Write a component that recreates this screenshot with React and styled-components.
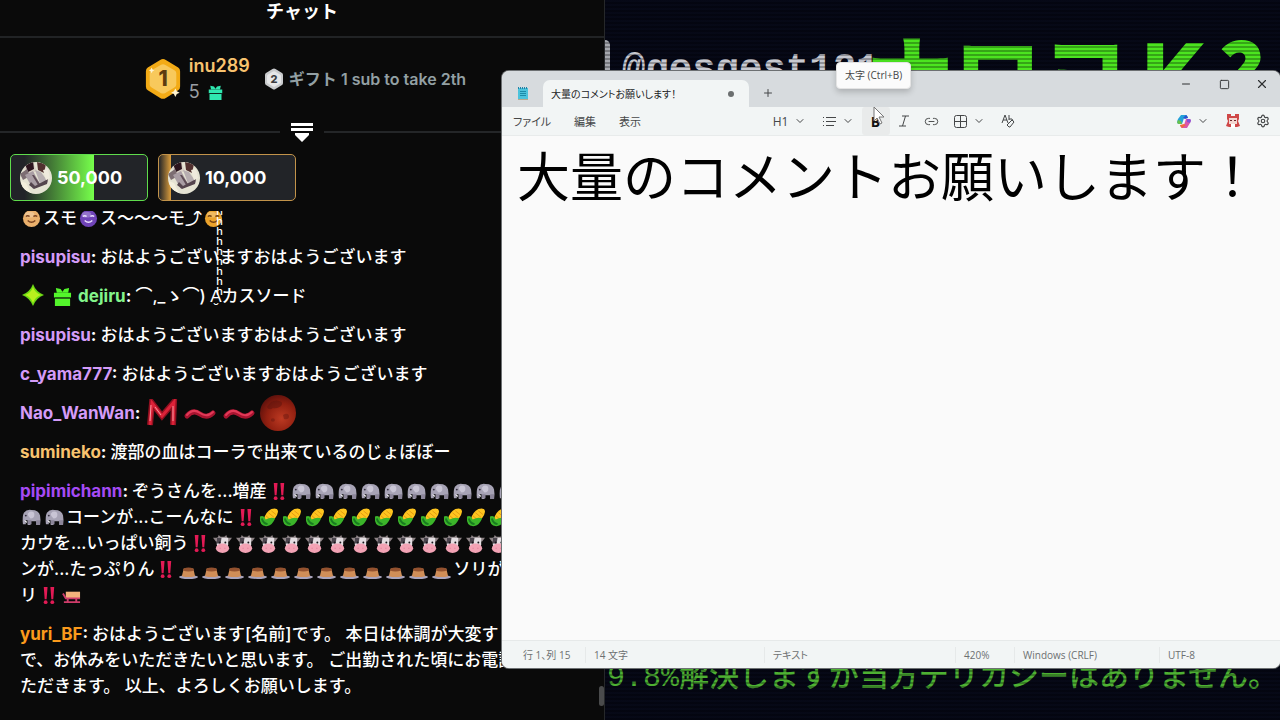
import React from "react";
import styled, { createGlobalStyle } from "styled-components";
import { ChevronDown, Link2, Minus, Plus, Settings, Square, X } from "lucide-react";

const CHAT_FONT = `Inter, "Noto Sans CJK JP", sans-serif`;
const UI_FONT = `"Open Sans", "Noto Sans CJK JP", sans-serif`;

const GlobalStyle = createGlobalStyle`
  *, *::before, *::after { box-sizing: border-box; }
  html, body, #root { height: 100%; }
  body { margin: 0; background: #0a0a0a; }
  button, textarea { font: inherit; color: inherit; border: 0; padding: 0; margin: 0; background: none; }
  h1, p { margin: 0; }
`;

const Desktop = styled.div`
  position: relative;
  display: grid;
  grid-template-columns: 605fr 675fr;
  height: 100%;
  min-height: 720px;
  overflow: hidden;
`;

/* ---------- chat ---------- */

const Chat = styled.section`
  display: flex;
  flex-direction: column;
  min-width: 0;
  min-height: 0;
  overflow: hidden;
  background: #0a0a0a;
  border-right: 1px solid #26282a;
  color: #fff;
  font-family: ${CHAT_FONT};
  font-size: 17px;
  line-height: 26px;
`;

const ChatHeader = styled.header`
  display: flex;
  justify-content: center;
  height: 38px;
  border-bottom: 2px solid #212325;
`;

const ChatTitle = styled.h1`
  font-size: 18px;
  font-weight: 700;
  line-height: 24px;
`;

const Leaderboard = styled.div`
  display: flex;
  align-items: center;
  justify-content: center;
  gap: 14px;
  height: 82px;
  padding-left: 6px;
`;

const Leader = styled.div`
  display: flex;
  align-items: center;
  gap: 7px;
`;

const LeaderName = styled.div`
  color: #f8c36f;
  font-size: 18px;
  font-weight: 600;
  line-height: 26px;
`;

const LeaderCount = styled.div`
  display: flex;
  align-items: center;
  gap: 6px;
  color: #9a9ea3;
  font-size: 18px;
  line-height: 26px;
`;

const RunnerUp = styled.div`
  display: flex;
  align-items: center;
  gap: 5px;
  color: #93a0a4;
  font-size: 16px;
  font-weight: 600;
`;

const Divider = styled.div`
  display: flex;
  align-items: center;
  gap: 10px;
  height: 24px;

  &::before,
  &::after {
    content: "";
    flex: 1;
    height: 2px;
    background: #242628;
  }
`;

const CollapseButton = styled.button`
  display: flex;
  width: 24px;
  justify-content: center;
`;

const Pins = styled.div`
  display: flex;
  gap: 10px;
  padding: 10px 10px 0;
`;

const Pin = styled.button`
  display: flex;
  align-items: center;
  gap: 5px;
  width: 138px;
  height: 47px;
  padding-left: 9px;
  border: 1px solid ${p => p.$edge};
  border-radius: 5px;
  background: linear-gradient(
    90deg,
    #222428 ${p => p.$from}%,
    ${p => p.$color} ${p => p.$fill}%,
    #222428 ${p => p.$fill}%
  );
  color: #fff;
  font-size: 18px;
  font-weight: 700;
`;

const Messages = styled.div`
  display: flex;
  flex: 1;
  flex-direction: column;
  justify-content: flex-end;
  gap: 13px;
  min-height: 0;
  margin-top: 10px;
  padding: 0 20px 21px;
  overflow: hidden;
  white-space: nowrap;
  font-weight: 500;
`;

const Message = styled.p`
  flex: none;

  svg {
    vertical-align: -4px;
  }
`;

const Name = styled.span`
  color: ${p => p.$color};
  font-weight: 700;
`;

const Colon = styled.span`
  font-weight: 700;
`;

const Emote = styled.svg`
  margin: 0 2px;
`;

const Stack = styled.span`
  position: relative;
`;

const StackedMarks = styled.span`
  position: absolute;
  bottom: 10px;
  left: 6px;
  width: 7px;
  font-size: 11px;
  font-weight: 500;
  line-height: 10px;
  white-space: pre-line;
`;

const ScrollThumb = styled.div`
  position: absolute;
  left: calc(47.27% - 6px);
  bottom: 14px;
  width: 5px;
  height: 20px;
  border-radius: 3px;
  background: #4a4b4c;
`;

/* ---------- stream screen behind the editor ---------- */

const Screen = styled.section`
  position: relative;
  display: flex;
  flex-direction: column;
  justify-content: space-between;
  min-width: 0;
  overflow: hidden;
  background: #050714;
  white-space: nowrap;

  &::after {
    content: "";
    position: absolute;
    inset: 0;
    background: repeating-linear-gradient(
      180deg,
      rgba(18, 24, 44, 0.1) 0 2px,
      rgba(2, 3, 10, 0.35) 2px 4px
    );
  }
`;

const ScreenTop = styled.div`
  display: flex;
  align-items: flex-start;
  padding-top: 34px;
`;

const BubbleEdge = styled.div`
  flex: none;
  width: 5px;
  height: 50px;
  margin-top: 6px;
  border-radius: 0 5px 0 0;
  background: #b6b8bc;
`;

const Handle = styled.span`
  padding: 13px 0 0 12px;
  color: #dcdde3;
  font: 700 39px/46px "Liberation Mono", monospace;
`;

const Logo = styled.span`
  margin-left: -14px;
  color: #52fb1e;
  font: 900 88px/74px "Noto Sans CJK JP", sans-serif;
`;

const Caption = styled.p`
  padding: 0 0 22px 2px;
  color: #55c234;
  font: 700 30px/40px "Liberation Mono", "Noto Sans CJK JP", monospace;
  font-weight: 500;
`;

/* ---------- editor window ---------- */

const Window = styled.main`
  position: absolute;
  top: 71px;
  right: 0;
  bottom: 52px;
  left: 502px;
  display: flex;
  flex-direction: column;
  overflow: hidden;
  border-radius: 7px;
  background: #fafafa;
  color: #454748;
  font-family: ${UI_FONT};
  font-size: 11px;
  box-shadow: 0 0 0 1px #6d7072;
`;

const TitleBar = styled.header`
  display: flex;
  align-items: flex-start;
  height: 36px;
  background: #d7dbde;
`;

const AppIcon = styled.div`
  display: flex;
  align-items: flex-end;
  justify-content: center;
  width: 41px;
  height: 30px;
`;

const Tab = styled.div`
  display: flex;
  align-items: center;
  justify-content: space-between;
  width: 206px;
  height: 27px;
  margin-top: 9px;
  padding: 0 15px 0 8px;
  border-radius: 7px 7px 0 0;
  background: #f2f5f5;
  color: #232425;
  font-size: 10px;
  font-feature-settings: "palt";
`;

const Dirty = styled.span`
  width: 6px;
  height: 6px;
  border-radius: 50%;
  background: #6c6f70;
`;

const NewTab = styled.button`
  display: flex;
  align-items: center;
  justify-content: center;
  width: 38px;
  height: 44px;
`;

const WindowControls = styled.div`
  display: flex;
  margin-left: auto;
`;

const WindowButton = styled.button`
  display: flex;
  align-items: center;
  justify-content: center;
  width: 39px;
  height: 26px;
  color: #2d2f30;

  &:last-child {
    width: 36px;
  }
`;

const Toolbar = styled.div`
  display: grid;
  grid-template-columns: 1fr auto 1fr;
  align-items: center;
  height: 29px;
  border-bottom: 1px solid #e8ebeb;
  background: #f2f5f5;
`;

const MenuGroup = styled.div`
  display: flex;
`;

const FormatGroup = styled.div`
  display: flex;
  padding-left: 5px;
`;

const AccountGroup = styled.div`
  display: flex;
  justify-content: flex-end;
  gap: 2px;
  padding-right: 3px;
`;

const MenuButton = styled.button`
  height: 28px;
  padding: 0 12px 0 11px;
  font-size: 11px;
  font-feature-settings: "palt";
`;

const Tool = styled.button`
  display: flex;
  align-items: center;
  justify-content: center;
  gap: ${p => (p.$wide ? 6 : 0)}px;
  width: ${p => (p.$wide ? 48 : 28)}px;
  height: 28px;
  border-radius: 3px;
  background: ${p => (p.$hover ? "#e9ebeb" : "transparent")};
  font-size: 12px;
`;

const BoldLetter = styled.b`
  color: #111;
  font-size: 14px;
`;

const Editor = styled.textarea`
  flex: 1;
  min-height: 0;
  padding: 0 0 0 15px;
  overflow: hidden;
  outline: 0;
  resize: none;
  color: #000;
  font: 400 53px/76px "Noto Sans CJK JP", sans-serif;
`;

const StatusBar = styled.footer`
  display: grid;
  grid-template-columns: 83px 1fr 191px 59px 145px 121px;
  align-items: center;
  height: 28px;
  border-top: 1px solid #e6e9e9;
  background: #f2f5f5;
  color: #6d7071;
  font-size: 10px;
  font-feature-settings: "palt";
`;

const StatusItem = styled.span`
  padding-left: ${p => (p.$first ? 20 : 8)}px;
  border-left: 1px solid ${p => (p.$first ? "transparent" : "#e6e9e9")};
  line-height: 16px;
  white-space: nowrap;
`;

const Tooltip = styled.div`
  position: absolute;
  top: 62px;
  left: 836px;
  padding: 0 8px;
  border: 1px solid #e4e4e4;
  border-radius: 4px;
  background: #fbfbfb;
  box-shadow: 0 3px 6px rgba(0, 0, 0, 0.2);
  color: #454748;
  font: 400 10px/25px ${UI_FONT};
  white-space: nowrap;
`;

const Pointer = styled.svg`
  position: absolute;
  top: 106px;
  left: 873px;
`;

/* ---------- drawings ---------- */

const HexBadge = ({ size, rank, rim, face, ink }) => (
  <svg width={size} height={size * 1.1} viewBox="0 0 40 44">
    <path d="M17 2q3-2 6 0l13 8q2 1 2 4v16q0 3-2 4l-13 8q-3 2-6 0L4 34q-2-1-2-4V14q0-3 2-4z" fill={rim} />
    <path d="M18 7q2-1 4 0l10 6q2 1 2 3v12q0 2-2 3l-10 6q-2 1-4 0l-10-6q-2-1-2-3V16q0-2 2-3z" fill={face} />
    <text x="20" y="30" textAnchor="middle" fontSize="22" fontWeight="800" fontFamily="Inter" fill={ink}>
      {rank}
    </text>
    {size > 30 && (
      <g fill="#fff3d0">
        <path d="M33 32l1.500 3 3 1.500-3 1.500-1.500 3-1.500-3-3-1.500 3-1.500z" />
        <path d="M8 10l1 2 2 1-2 1-1 2-1-2-2-1 2-1z" />
      </g>
    )}
  </svg>
);

const Gift = ({ size, color }) => (
  <Emote width={size} height={size} viewBox="0 0 20 20">
    <path d="M1 6h18v5H1z M2 12h16v8H2z" fill={color} />
    <path d="M3 1l5 1 2 3 2-3 5-1-1 5H4z" fill={color} />
    <path d="M2 11h16v1H2z" fill="#0a0a0a" opacity=".5" />
  </Emote>
);

const Sparkle = () => (
  <Emote width="22" height="22" viewBox="0 0 22 22">
    <path d="M11 0q3 8 11 11-8 3-11 11-3-8-11-11 8-3 11-11z" fill="#6bd914" />
    <path d="M11 3q2 6 8 8-6 2-8 8-2-6-8-8 6-2 8-8z" fill="#b8f01e" />
  </Emote>
);

const Collapse = () => (
  <svg width="22" height="20" viewBox="0 0 22 20" fill="#fff">
    <path d="M0 1h22v3H0z M0 6h22v3H0z M4 11h14v2l-7 7-7-7z" />
  </svg>
);

const Avatar = () => (
  <svg width="32" height="32" viewBox="0 0 32 32">
    <clipPath id="round"><circle cx="16" cy="16" r="16" /></clipPath>
    <g clipPath="url(#round)">
      <path d="M0 0h32v32H0z" fill="#e5e3d3" />
      <path d="M3 4l10-4 4 9-9 4z" fill="#d8d0c6" />
      <path d="M5 2l8-3 1 8-6 3z" fill="#2b141d" />
      <path d="M17 0l9 2-2 9-6-3z" fill="#51302f" />
      <path d="M0 12l7-5 3 7-7 4z" fill="#7c6d72" />
      <path d="M5 13l8-4 7 13-7 5z" fill="#a99da4" />
      <path d="M15 8l6 2 7 10-7 4z" fill="#b7aeb1" />
      <path d="M12 13l2 0 6 9-2 1z" fill="#5f4d56" />
      <path d="M11 20l4 4 13-7-1 5-13 5-5-4z" fill="#54444d" />
      <path d="M1 19l5 2 5 10-9-4z" fill="#f3efdd" />
      <path d="M23 8l5-1 2 9-4 2z" fill="#efeadd" />
    </g>
  </svg>
);

const Face = ({ skin, ink }) => (
  <Emote width="19" height="19" viewBox="0 0 20 20">
    <circle cx="10" cy="10" r="9" fill={skin} />
    <ellipse cx="8" cy="6" rx="5" ry="3" fill="#fff" opacity=".25" />
    <path d="M4 8q2-2 4 0M12 8q2-2 4 0M6 12q4 4 8 0" fill="none" stroke={ink} strokeWidth="1.500" />
  </Emote>
);

const Bangs = () => (
  <Emote width="19" height="19" viewBox="0 0 20 20" fill="#e31a55">
    <path d="M5 1h4l-1 13H6zM12 1h4l-1 13h-2z" />
    <circle cx="7" cy="17" r="2" />
    <circle cx="14" cy="17" r="2" />
  </Emote>
);

const Elephant = () => (
  <Emote width="19" height="19" viewBox="0 0 20 20">
    <path d="M1 17q-1-8 1-12 3-4 8-3 8 0 9 6 1 5 0 10h-4v-4H9v4H6V13H4v4z" fill="#a7a3b5" />
    <path d="M8 4q5-1 5 3 0 4-4 4-3-2-3-5z" fill="#c9c5d5" />
    <path d="M6 13h4v4H6zM15 13h4v5h-4z" fill="#8b8599" />
    <path d="M2 13l3 1v2z" fill="#fff" />
    <circle cx="4" cy="8" r="1" fill="#35303f" />
  </Emote>
);

const Corn = () => (
  <Emote width="19" height="19" viewBox="0 0 20 20">
    <path d="M5 12Q7 4 13 1q7-2 7 3-1 7-9 11z" fill="#ffc51f" />
    <path d="M10 5l6 5M13 3l5 4M7 8l6 5" stroke="#e29a12" strokeWidth="1" />
    <path d="M1 9q4-2 6 3 6-3 10-1-3 7-8 8-9 1-8-10z" fill="#3bb52a" />
    <path d="M3 11q1 5 6 6" stroke="#187a20" strokeWidth="2" fill="none" />
  </Emote>
);

const Cow = () => (
  <Emote width="19" height="19" viewBox="0 0 20 20">
    <path d="M0 4h5l1-3 2 2h4l2-2 1 3h5l-3 4H3z" fill="#8d8285" />
    <path d="M4 4h12v7l-1 5H5l-1-5z" fill="#e4dee2" />
    <path d="M4 4h5l-1 6H4z" fill="#4b454d" />
    <ellipse cx="10" cy="15" rx="7" ry="5" fill="#f3a3b5" />
    <circle cx="7" cy="9" r="1" fill="#17131a" />
    <circle cx="13" cy="9" r="1" fill="#17131a" />
    <path d="M7 15h1M12 15h1" stroke="#d9748e" strokeWidth="1" />
  </Emote>
);

const Pudding = () => (
  <Emote width="19" height="19" viewBox="0 0 20 20">
    <ellipse cx="10" cy="18" rx="10" ry="2" fill="#aaa5bd" />
    <path d="M5 9h10l2 8q-7 2-14 0z" fill="#d08e58" />
    <path d="M5 9q5-2 10 0l1 2q-6 2-12 0z" fill="#94522f" />
  </Emote>
);

const Sled = () => (
  <Emote width="19" height="19" viewBox="0 0 20 20">
    <path d="M4 6h15v7H4z" fill="#f5b27c" />
    <path d="M1 8l3 5h15M2 17h17M6 13v4M15 13v4" fill="none" stroke="#cf3c6a" strokeWidth="2" />
  </Emote>
);

const Horn = () => (
  <Emote width="32" height="28" viewBox="0 0 32 28">
    <path d="M4 26L6 4l10 13L28 3l-1 23" fill="none" stroke="#8f1020" strokeWidth="6" />
    <path d="M4 26L6 4l10 13L28 3l-1 23" fill="none" stroke="#dc2238" strokeWidth="3" />
    <path d="M4 22L5 6M9 8l6 8M27 22V7" fill="none" stroke="#f59aa2" />
  </Emote>
);

const Wave = () => (
  <Emote width="35" height="28" viewBox="0 0 35 28" fill="none" strokeLinecap="round">
    <path d="M5 17q6-7 13-2 7 5 13-1" stroke="#a81430" strokeWidth="5" />
    <path d="M5 16q6-7 13-2 7 5 13-1" stroke="#e23a58" strokeWidth="2" />
  </Emote>
);

const BloodMoon = () => (
  <Emote width="36" height="36" viewBox="0 0 36 36">
    <defs>
      <radialGradient id="moon" cx=".6" cy=".65" r=".7">
        <stop offset="0" stopColor="#bd3a22" />
        <stop offset=".6" stopColor="#901f10" />
        <stop offset="1" stopColor="#5a100c" />
      </radialGradient>
    </defs>
    <circle cx="18" cy="18" r="18" fill="url(#moon)" />
    <path d="M7 12q5-8 12-6 5 1 2 5-4 3-8 2-4 3-6-1z" fill="#5c130d" opacity=".5" />
    <path d="M23 20q5-3 6 1 0 4-5 3zM11 24q3-2 4 1-1 3-4 1z" fill="#6b180f" opacity=".5" />
  </Emote>
);

const NotepadIcon = () => (
  <svg width="12" height="15" viewBox="0 0 12 15">
    <path d="M1 2h10v11H1z" fill="#4cc3dc" />
    <path d="M1 1h1v2H1zM3 1h1v2H3zM5 1h1v2H5zM7 1h1v2H7zM9 1h1v2H9z" fill="#2381a5" />
    <path d="M3 5.500h6M3 7.500h6M3 9.500h6" stroke="#1b8ba8" />
    <path d="M1 13h10v1H1z" fill="#b9a98c" />
  </svg>
);

const ListIcon = () => (
  <svg width="14" height="12" viewBox="0 0 14 12" stroke="currentColor">
    <path d="M4 2.500h10M4 6.500h10M4 10.500h8M1 2.500h1M1 6.500h1M1 10.500h1" />
  </svg>
);

const ItalicIcon = () => (
  <svg width="12" height="12" viewBox="0 0 12 12" fill="none" stroke="currentColor">
    <path d="M4 1h7M1 11h7M7.500 1l-3 10" />
  </svg>
);

const TableIcon = () => (
  <svg width="13" height="13" viewBox="0 0 13 13" fill="none" stroke="currentColor">
    <rect x=".5" y=".5" width="12" height="12" rx="2" />
    <path d="M6.500 1v11M1 6.500h11" />
  </svg>
);

const ClearFormatIcon = () => (
  <svg width="14" height="14" viewBox="0 0 14 14" fill="none" stroke="currentColor">
    <path d="M1 9l3-8 3 8M2 6h4M8 1v5" />
    <path d="M8 5q4-1 4 2M7 10l4-4 2 2-4 5H8l-2-2z" />
  </svg>
);

const Copilot = () => (
  <svg width="14" height="13" viewBox="0 0 14 13">
    <path d="M4 0h5q1 0 2 3H7L5 9H2Q-1 9 1 4z" fill="#23a1d8" />
    <path d="M2 9Q-1 9 1 5l3 1 1 3z" fill="#69c24a" />
    <path d="M9 0q1 0 2 3L8 4 6 3z" fill="#2853d0" />
    <path d="M10 13H5Q4 13 3 10h4l2-6h3q3 0 1 4z" fill="#d857ac" />
    <path d="M5 13q-1 0-2-3l4-1 2 1z" fill="#f3683c" />
    <path d="M10 4h2q3 0 1 4l-3-1z" fill="#8452d9" />
  </svg>
);

const Account = () => (
  <svg width="14" height="14" viewBox="0 0 14 14">
    <path d="M1 0h4v2h4V0h4v5l-1 2 2 5-3 1H3l-3-1 2-5-1-2z" fill="#cf4747" />
    <path d="M3 4h8v6H3z" fill="#f3d6d0" />
    <path d="M4 6h2v1H4zM8 6h2v1H8z" fill="#6b2429" />
    <path d="M5 10h4v4H5z" fill="#fff" />
  </svg>
);

const repeat = (Icon, count) => Array.from({ length: count }, (unused, i) => <Icon key={i} />);

const Chevron = () => <ChevronDown size={12} strokeWidth={2} />;

/* ---------- data ---------- */

const LILAC = "#d49bf8";

const MESSAGES = [
  {
    body: (
      <>
        <Face skin="#eab06c" ink="#79421f" />
        スモ
        <Face skin="#7044b8" ink="#ece2ff" />
        ス〜〜〜モ⤴
        <Face skin="#eba32c" ink="#74400f" />
      </>
    )
  },
  { name: "pisupisu", color: LILAC, body: "おはようございますおはようございます" },
  {
    name: "dejiru",
    color: "#83f58b",
    badges: (
      <>
        <Sparkle /> <Gift size={19} color="#53f52b" />{" "}
      </>
    ),
    body: (
      <>
        ⌒,_ゝ⌒){" "}
        <Stack>
          A̮<StackedMarks aria-hidden="true">{"h\n".repeat(9)}</StackedMarks>
        </Stack>
        カスソード
      </>
    )
  },
  { name: "pisupisu", color: LILAC, body: "おはようございますおはようございます" },
  { name: "c_yama777", color: LILAC, body: "おはようございますおはようございます" },
  {
    name: "Nao_WanWan",
    color: LILAC,
    tall: true,
    body: (
      <>
        <Horn />
        <Wave />
        <Wave />
        <BloodMoon />
      </>
    )
  },
  { name: "sumineko", color: "#f8c36f", body: "渡部の血はコーラで出来ているのじょぼぼー" },
  {
    name: "pipimichann",
    color: "#a64af5",
    body: (
      <>
        ぞうさんを...増産
        <Bangs />
        {repeat(Elephant, 13)}
        <br />
        {repeat(Elephant, 2)}
        コーンが...こーんなに
        <Bangs />
        {repeat(Corn, 14)}
        <br />
        カウを...いっぱい飼う
        <Bangs />
        {repeat(Cow, 16)}
        <br />
        ンが...たっぷりん
        <Bangs />
        {repeat(Pudding, 12)}
        ソリが
        <br />
        リ
        <Bangs />
        <Sled />
      </>
    )
  },
  {
    name: "yuri_BF",
    color: "#fb9a1c",
    body: (
      <>
        おはようございます[名前]です。 本日は体調が大変すぐ
        <br />
        で、お休みをいただきたいと思います。 ご出勤された頃にお電話
        <br />
        ただきます。 以上、よろしくお願いします。
      </>
    )
  }
];

const TallMessage = styled(Message)`
  display: flex;
  align-items: center;
  height: 26px;

  svg {
    flex: none;
  }
`;

const ChatMessage = ({ name, color, badges, tall, body }) => {
  const Row = tall ? TallMessage : Message;
  return (
    <Row>
      {badges}
      {name && (
        <>
          <Name $color={color}>{name}</Name>
          <Colon>:&nbsp;</Colon>
        </>
      )}
      {body}
    </Row>
  );
};

class App extends React.Component {
  constructor(props) {
    super(props);
    this.state = { text: "大量のコメントお願いします！" };
    this.onChange = this.onChange.bind(this);
  }

  onChange(event) {
    this.setState({ text: event.target.value });
  }

  render() {
    const { text } = this.state;

    return (
      <Desktop>
        <GlobalStyle />
        <Chat>
          <ChatHeader>
            <ChatTitle>チャット</ChatTitle>
          </ChatHeader>
          <Leaderboard>
            <Leader>
              <HexBadge size={38} rank="1" rim="#f3ab16" face="#f8c95c" ink="#5c3c10" />
              <div>
                <LeaderName>inu289</LeaderName>
                <LeaderCount>
                  5 <Gift size={15} color="#2fe8b0" />
                </LeaderCount>
              </div>
            </Leader>
            <RunnerUp>
              <HexBadge size={20} rank="2" rim="#c9cbcd" face="#e6e7e8" ink="#3c3d3f" />
              ギフト 1 sub to take 2th
            </RunnerUp>
          </Leaderboard>
          <Divider>
            <CollapseButton aria-label="collapse">
              <Collapse />
            </CollapseButton>
          </Divider>
          <Pins>
            <Pin $edge="#5fdc4c" $color="#76ff4b" $from={10} $fill={61}>
              <Avatar />
              50,000
            </Pin>
            <Pin $edge="#c2934a" $color="#e0a03c" $from={0} $fill={9}>
              <Avatar />
              10,000
            </Pin>
          </Pins>
          <Messages>
            {MESSAGES.map((message, index) => (
              <ChatMessage key={index} {...message} />
            ))}
          </Messages>
        </Chat>
        <Screen>
          <ScreenTop>
            <BubbleEdge />
            <Handle>@gesgest121</Handle>
            <Logo>ナロヨＫ?</Logo>
          </ScreenTop>
          <Caption>9.8%解決しますが当方デリカシーはありません。</Caption>
        </Screen>
        <ScrollThumb />
        <Window>
          <TitleBar>
            <AppIcon>
              <NotepadIcon />
            </AppIcon>
            <Tab>
              大量のコメントお願いします！
              <Dirty />
            </Tab>
            <NewTab aria-label="new tab">
              <Plus size={12} strokeWidth={2} />
            </NewTab>
            <WindowControls>
              <WindowButton aria-label="minimize">
                <Minus size={12} strokeWidth={2} />
              </WindowButton>
              <WindowButton aria-label="maximize">
                <Square size={11} strokeWidth={2} />
              </WindowButton>
              <WindowButton aria-label="close">
                <X size={14} strokeWidth={2} />
              </WindowButton>
            </WindowControls>
          </TitleBar>
          <Toolbar>
            <MenuGroup>
              <MenuButton>ファイル</MenuButton>
              <MenuButton>編集</MenuButton>
              <MenuButton>表示</MenuButton>
            </MenuGroup>
            <FormatGroup>
              <Tool $wide>
                H1
                <Chevron />
              </Tool>
              <Tool $wide aria-label="list">
                <ListIcon />
                <Chevron />
              </Tool>
              <Tool $hover>
                <BoldLetter>B</BoldLetter>
              </Tool>
              <Tool aria-label="italic">
                <ItalicIcon />
              </Tool>
              <Tool aria-label="link">
                <Link2 size={15} strokeWidth={1.5} />
              </Tool>
              <Tool $wide aria-label="table">
                <TableIcon />
                <Chevron />
              </Tool>
              <Tool aria-label="clear format">
                <ClearFormatIcon />
              </Tool>
            </FormatGroup>
            <AccountGroup>
              <Tool $wide aria-label="copilot">
                <Copilot />
                <Chevron />
              </Tool>
              <Tool aria-label="account">
                <Account />
              </Tool>
              <Tool aria-label="settings">
                <Settings size={14} strokeWidth={2} />
              </Tool>
            </AccountGroup>
          </Toolbar>
          <Editor aria-label="editor" spellCheck={false} value={text} onChange={this.onChange} />
          <StatusBar>
            <StatusItem $first>行 1、列 15</StatusItem>
            <StatusItem>{text.length} 文字</StatusItem>
            <StatusItem>テキスト</StatusItem>
            <StatusItem>420%</StatusItem>
            <StatusItem>Windows (CRLF)</StatusItem>
            <StatusItem>UTF-8</StatusItem>
          </StatusBar>
        </Window>
        <Tooltip role="tooltip">太字 (Ctrl+B)</Tooltip>
        <Pointer width="12" height="19" viewBox="0 0 12 19">
          <path d="M1 1v14l3-3 3 6 2-1-3-6h5z" fill="#fff" stroke="#777" />
        </Pointer>
      </Desktop>
    );
  }
}

export default App;
